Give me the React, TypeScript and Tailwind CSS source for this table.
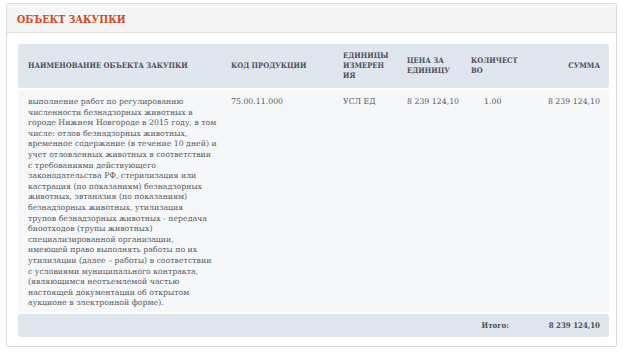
import React from "react";

const lines = [
  "выполнение работ по регулированию",
  "численности безнадзорных животных в",
  "городе Нижнем Новгороде в 2015 году, в том",
  "числе: отлов безнадзорных животных,",
  "временное содержание (в течение 10 дней) и",
  "учет отловленных животных в соответствии",
  "с требованиями действующего",
  "законодательства РФ, стерилизация или",
  "кастрация (по показаниям) безнадзорных",
  "животных, эвтаназия (по показаниям)",
  "безнадзорных животных, утилизация",
  "трупов безнадзорных животных - передача",
  "биоотходов (трупы животных)",
  "специализированной организации,",
  "имеющей право выполнять работы по их",
  "утилизации (далее – работы) в соответствии",
  "с условиями муниципального контракта,",
  "(являющимся неотъемлемой частью",
  "настоящей документации об открытом",
  "аукционе в электронной форме).",
];

export default function App() {
  return (
    <div
      className="w-[623px] h-[355px] bg-white pt-[3px] px-[6px]"
      style={{ fontFamily: '"DejaVu Serif", serif' }}
    >
      <div className="border border-[#dcdcdc] rounded-[2px] h-[344px] bg-white">
        <div className="h-[29px] bg-[#f5f5f5] border-b border-[#dedede] flex items-center pl-[10px] pt-[3px]">
          <span className="text-[10.5px] font-bold text-[#d5481b] font-stretch-condensed">ОБЪЕКТ ЗАКУПКИ</span>
        </div>
        <div className="pl-[11px] pr-[7px] pt-[11px]">
          <div className="grid grid-cols-[203px_112px_64px_64px_65px_1fr] bg-[#dfe6ed] rounded-[3px] h-[44px] items-center text-[7.6px] font-bold text-[#4a4f55] leading-[10px] pl-[10px] pr-[9px] font-stretch-condensed">
            <div>НАИМЕНОВАНИЕ ОБЪЕКТА ЗАКУПКИ</div>
            <div>КОД ПРОДУКЦИИ</div>
            <div>ЕДИНИЦЫ<br />ИЗМЕРЕН<br />ИЯ</div>
            <div>ЦЕНА ЗА<br />ЕДИНИЦУ</div>
            <div>КОЛИЧЕСТ<br />ВО</div>
            <div className="text-right">СУММА</div>
          </div>
          <div className="mt-[2px] grid grid-cols-[203px_112px_64px_64px_65px_1fr] bg-[#f6f7f8] rounded-[3px] h-[222px] pt-[7px] text-[7.8px] text-[#555a5f] leading-[10.6px] pl-[10px] pr-[9px]">
            <div className="whitespace-nowrap">
              {lines.map((l, i) => (
                <div key={i}>{l}</div>
              ))}
            </div>
            <div>75.00.11.000</div>
            <div>УСЛ ЕД</div>
            <div>8 239 124,10</div>
            <div className="pl-[13px]">1.00</div>
            <div className="text-right">8 239 124,10</div>
          </div>
          <div className="mt-[2px] bg-[#dfe6ed] rounded-[3px] h-[23px] flex items-center justify-end pl-[10px] pr-[9px] text-[7.8px] font-bold text-[#4a4f55] font-stretch-condensed">
            <span className="mr-[40px]">Итого:</span>
            <span>8 239 124,10</span>
          </div>
        </div>
      </div>
    </div>
  );
}
